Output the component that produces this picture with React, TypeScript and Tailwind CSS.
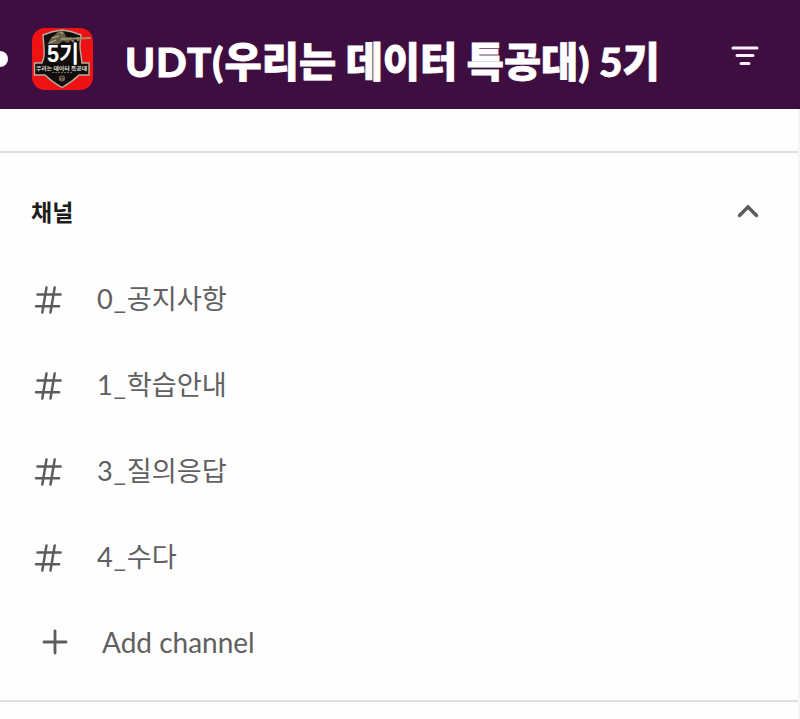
import type { ReactNode } from "react";

const channels = [
  { prefix: "0_", name: "공지사항" },
  { prefix: "1_", name: "학습안내" },
  { prefix: "3_", name: "질의응답" },
  { prefix: "4_", name: "수다" },
];

function WorkspaceLogo() {
  return (
    <svg width="61" height="62" viewBox="0 0 61 62" className="ml-6 shrink-0">
      <rect width="61" height="62" rx="13" fill="#ee1212" />
      <path
        d="M11 7 Q20 3 30 2 Q40 3 49 7 Q47 18 49 27 L50 35 H57 V47 H47 Q40 54 30 59.5 Q20 54 13 47 H2.5 V35 H10 Q13 28 12 20 Z"
        fill="#100d0c"
        stroke="#b3b0a4"
        strokeWidth="1.4"
      />
      {/* soldier and rifle */}
      <path d="M24 6 Q27 0 32 4 L34 9 L41 10 L36 15 L31 13 L25 17 H15 L19 10 Z" fill="#655f4a" />
      <path d="M29 11 L59 10 M38 10 L42 14 M46 9 V13" stroke="#9b8c6a" strokeWidth="1.8" fill="none" />
      <path d="M20 10 L27 8 M17 15 L24 12 M28 4 L31 6" stroke="#b5a987" strokeWidth="1.2" />
      <text
        x="31"
        y="34"
        textAnchor="middle"
        fontSize="23"
        fontWeight="700"
        fill="#fff"
        stroke="#100d0c"
        strokeWidth="1.6"
        paintOrder="stroke"
        textLength="32"
        lengthAdjust="spacingAndGlyphs"
        className="font-['Liberation_Sans','Noto_Sans_CJK_KR',sans-serif]"
      >
        5기
      </text>
      <text
        x="29.5"
        y="42"
        textAnchor="middle"
        fontSize="5"
        fontWeight="700"
        fill="#e6e4de"
        textLength="51"
        lengthAdjust="spacingAndGlyphs"
        className="font-['Noto_Sans_CJK_KR',sans-serif]"
      >
        우리는 데이터 특공대
      </text>
      <path d="M20 44.5 H41" stroke="#6b6859" strokeWidth="1" strokeDasharray="2 1" />
      <circle cx="30" cy="50.5" r="3" fill="#776f57" />
      <path d="M28 49.5 H32 M30 48 V53" stroke="#25221b" strokeWidth=".7" />
    </svg>
  );
}

function HashIcon() {
  return (
    <svg
      width="28"
      height="28"
      viewBox="0 0 28 28"
      className="mt-0.5"
      fill="none"
      stroke="#5c5c5c"
      strokeWidth="2.5"
      strokeLinecap="round"
    >
      <path d="M3.5 8.4H26.6M2 20.3H25.1M12.5 1.4L8.3 26.5M20.7 1.4L16.5 26.5" />
    </svg>
  );
}

function Row({ icon, children }: { icon: ReactNode; children: ReactNode }) {
  return (
    <li className="flex h-[86px] items-center pl-[34px]">
      {icon}
      {children}
    </li>
  );
}

export default function App() {
  return (
    <div className="flex h-[719px] w-[800px] flex-col overflow-hidden bg-[#fefefe] font-['Lato','Noto_Sans_CJK_KR',sans-serif]">
      <header className="flex h-[109px] shrink-0 items-center bg-[#3f0e40] pt-[9px]">
        <span className="-ml-2 h-4 w-4 rounded-full bg-white" />
        <WorkspaceLogo />
        <h1 className="ml-8 mt-[7px] whitespace-nowrap text-[40.4px] font-black leading-none text-white [-webkit-text-stroke:0.8px_white]">
          <span className="tracking-[1px]">UDT(</span>우리는 데이터 특공대) 5기
        </h1>
        <svg
          width="28"
          height="20"
          viewBox="0 0 28 20"
          className="mb-[6px] mr-[41px] ml-auto"
          stroke="#fbeefb"
          strokeWidth="3"
          strokeLinecap="round"
        >
          <path d="M2 2H26M6 9.5H22M10 17.5H18" />
        </svg>
      </header>

      <main className="flex-1 border-r-2 border-[#f5f5f5] pt-[42px]">
        <section className="h-[551px] border-y-2 border-[#dfdfdf]">
          <div className="flex h-[103px] items-center justify-between pt-[15px] pl-[31px] pr-[39px]">
            <h2 className="text-[23px] font-bold text-[#1d1c1d]">채널</h2>
            <svg
              width="22"
              height="14"
              viewBox="0 0 22 14"
              className="mb-[3px]"
              fill="none"
              stroke="#5c5c5c"
              strokeWidth="3.4"
              strokeLinecap="round"
            >
              <path d="M2.5 11.5L11 3L19.5 11.5" />
            </svg>
          </div>
          <ul>
            {channels.map(({ prefix, name }) => (
              <Row key={name} icon={<HashIcon />}>
                <span className="ml-[35px] text-[27.2px] text-[#616061]">
                  <span className="tracking-[0.7px]">{prefix}</span>
                  {name}
                </span>
              </Row>
            ))}
            <Row
              icon={
                <svg
                  width="26"
                  height="26"
                  viewBox="0 0 26 26"
                  className="mb-0.5 ml-2"
                  stroke="#5c5c5c"
                  strokeWidth="2.8"
                  strokeLinecap="round"
                >
                  <path d="M2 13H24M13 2V24" />
                </svg>
              }
            >
              <span className="mb-0.5 ml-[34px] text-[28px] text-[#616061]">Add channel</span>
            </Row>
          </ul>
        </section>
      </main>
    </div>
  );
}
